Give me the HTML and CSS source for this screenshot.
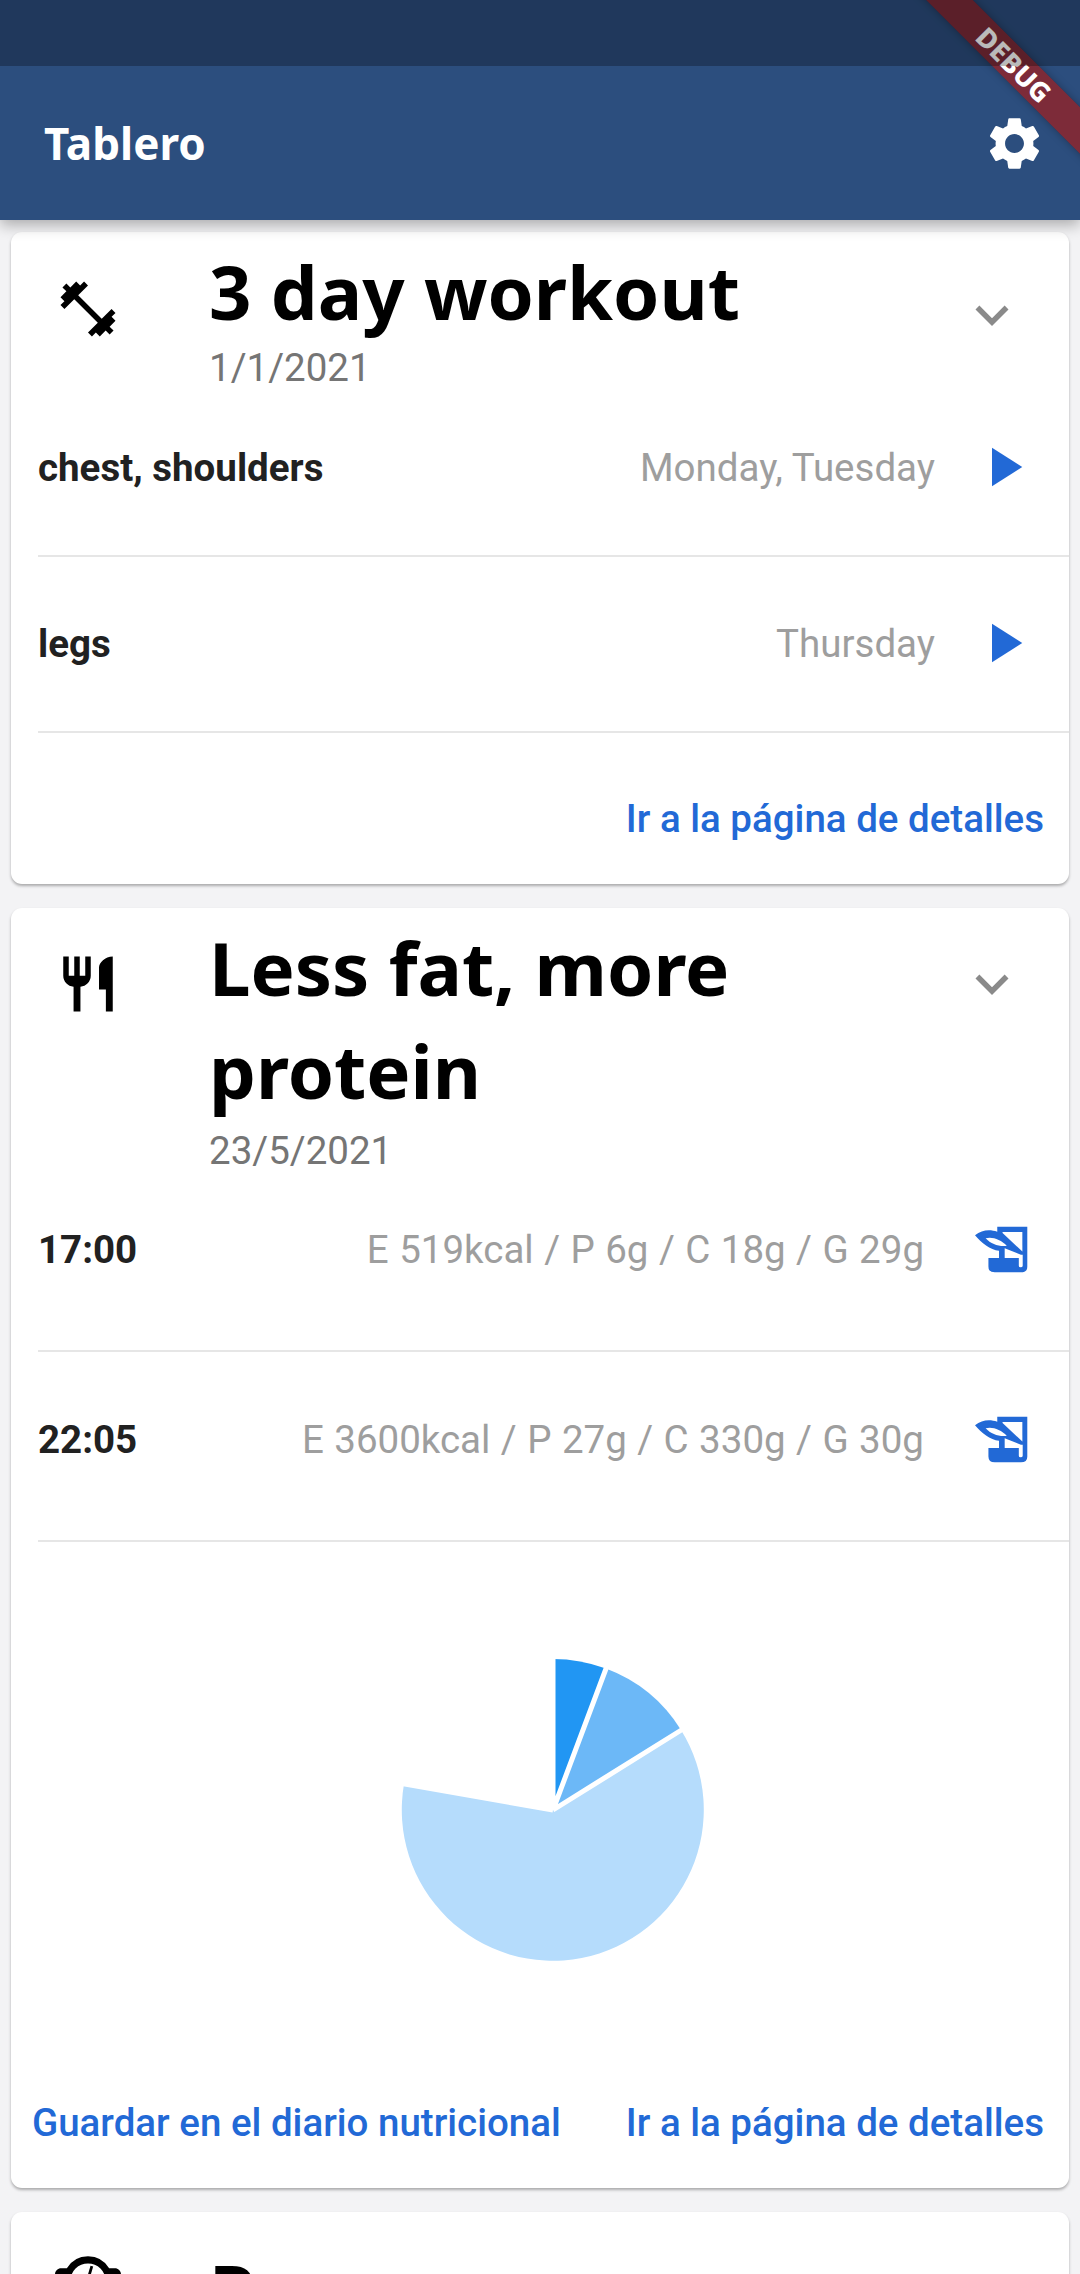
FILE: index.html
```html
<!DOCTYPE html>
<html lang="en">
<head>
  <meta charset="UTF-8">
  <meta name="viewport" content="width=device-width, initial-scale=1.0">
  <title>Tablero</title>
  <link rel="stylesheet" href="styles.css">
</head>
<body>
  <div class="screen">
    <header class="appbar">
      <h1 class="appbar-title">Tablero</h1>
      <svg class="gear" viewBox="0 0 24 24"><path d="M19.14 12.94c.04-.3.06-.61.06-.94 0-.32-.02-.64-.07-.94l2.03-1.58a.49.49 0 0 0 .12-.61l-1.92-3.32a.488.488 0 0 0-.59-.22l-2.39.96c-.5-.38-1.03-.7-1.62-.94l-.36-2.54a.484.484 0 0 0-.48-.41h-3.84c-.24 0-.43.17-.47.41l-.36 2.54c-.59.24-1.13.57-1.62.94l-2.39-.96c-.22-.08-.47 0-.59.22L2.74 8.87c-.12.21-.08.47.12.61l2.03 1.58c-.05.3-.09.63-.09.94s.02.64.07.94l-2.03 1.58a.49.49 0 0 0-.12.61l1.92 3.32c.12.22.37.29.59.22l2.39-.96c.5.38 1.03.7 1.62.94l.36 2.54c.05.24.24.41.48.41h3.84c.24 0 .44-.17.47-.41l.36-2.54c.59-.24 1.13-.56 1.62-.94l2.39.96c.22.08.47 0 .59-.22l1.92-3.32c.12-.22.07-.47-.12-.61l-2.01-1.58zM12 15.6c-1.98 0-3.6-1.62-3.6-3.6s1.62-3.6 3.6-3.6 3.6 1.62 3.6 3.6-1.62 3.6-3.6 3.6z"/></svg>
    </header>

    <main class="list">
      <section class="card card-workout">
        <div class="card-head">
          <div class="head-icon">
            <svg class="icon-big" viewBox="0 0 24 24"><path d="M20.57 14.86 22 13.43 20.57 12 17 15.57 8.43 7 12 3.43 10.57 2 9.14 3.43 7.71 2 5.57 4.14 4.14 2.71 2.71 4.14l1.43 1.43L2 7.71l1.43 1.43L2 10.57 3.43 12 7 8.43 15.57 17 12 20.57 13.43 22l1.43-1.43L16.29 22l2.14-2.14 1.43 1.43 1.43-1.43-1.43-1.43L22 16.29z"/></svg>
          </div>
          <div class="head-text">
            <h2 class="card-title">3 day workout</h2>
            <div class="card-date">1/1/2021</div>
          </div>
          <svg class="chevron" viewBox="0 0 24 24"><path d="M7.41 8.59 12 13.17l4.59-4.58L18 10l-6 6-6-6z"/></svg>
        </div>
        <div class="row">
          <span class="row-name">chest, shoulders</span>
          <span class="row-info">Monday, Tuesday</span>
          <svg class="row-play" viewBox="0 0 24 24"><path d="M8 5v14l11-7z"/></svg>
        </div>
        <div class="row">
          <span class="row-name">legs</span>
          <span class="row-info">Thursday</span>
          <svg class="row-play" viewBox="0 0 24 24"><path d="M8 5v14l11-7z"/></svg>
        </div>
        <div class="card-links">
          <a class="link">Ir a la página de detalles</a>
        </div>
      </section>

      <section class="card card-diet">
        <div class="card-head">
          <div class="head-icon">
            <svg class="icon-big" viewBox="0 0 24 24"><path d="M11 9H9V2H7v7H5V2H3v7c0 2.12 1.66 3.84 3.75 3.97V22h2.5v-9.03C11.34 12.84 13 11.12 13 9V2h-2v7zm5-3v8h2.5v8H21V2c-2.76 0-5 2.24-5 4z"/></svg>
          </div>
          <div class="head-text">
            <h2 class="card-title">Less fat, more protein</h2>
            <div class="card-date">23/5/2021</div>
          </div>
          <svg class="chevron" viewBox="0 0 24 24"><path d="M7.41 8.59 12 13.17l4.59-4.58L18 10l-6 6-6-6z"/></svg>
        </div>
        <div class="row row-meal">
          <span class="row-name">17:00</span>
          <span class="row-info">E 519kcal / P 6g / C 18g / G 29g</span>
          <svg class="row-log" viewBox="42 45 150 142" preserveAspectRatio="none">
            <path d="M105 47H190V168Q190 185 172 185H98Q80 185 80 167V142H110V120C85 118 60 95 42 73C62 55 85 55 105 62Z"/>
            <path class="log-cut" d="M120 63H176V122L120 66Z"/>
            <path class="log-cut" d="M126 112L172 132H177V165Q177 170 171 170Q166 170 166 165V142H126Z"/>
            <path class="log-cut" d="M72 82C90 76 115 85 132 105C110 108 88 100 72 82Z"/>
          </svg>
        </div>
        <div class="row row-meal">
          <span class="row-name">22:05</span>
          <span class="row-info">E 3600kcal / P 27g / C 330g / G 30g</span>
          <svg class="row-log" viewBox="42 45 150 142" preserveAspectRatio="none">
            <path d="M105 47H190V168Q190 185 172 185H98Q80 185 80 167V142H110V120C85 118 60 95 42 73C62 55 85 55 105 62Z"/>
            <path class="log-cut" d="M120 63H176V122L120 66Z"/>
            <path class="log-cut" d="M126 112L172 132H177V165Q177 170 171 170Q166 170 166 165V142H126Z"/>
            <path class="log-cut" d="M72 82C90 76 115 85 132 105C110 108 88 100 72 82Z"/>
          </svg>
        </div>
        <div class="pie-wrap">
          <svg class="pie" viewBox="-160 -160 320 320">
            <path d="M0 0V-151A151 151 0 0 1 53 -141.4Z" fill="#2196f3"/>
            <path d="M0 0L53 -141.4A151 151 0 0 1 128 -80Z" fill="#6cb8f7"/>
            <path d="M0 0L128 -80A151 151 0 1 1 -149 -26Z" fill="#b5dcfc"/>
            <path d="M0 0V-153M0 0L54 -144M0 0L130 -81M0 0L-151 -26.4" stroke="#fff" stroke-width="5" fill="none"/>
          </svg>
        </div>
        <div class="card-links">
          <a class="link">Guardar en el diario nutricional</a>
          <a class="link">Ir a la página de detalles</a>
        </div>
      </section>

      <section class="card card-weight">
        <div class="card-head">
          <div class="head-icon">
            <svg class="icon-big" viewBox="0 0 24 24">
              <path d="M12 3a9 9 0 0 0-7.7 4.4H2.2C1 7.4 0 8.4 0 9.6V20h24V9.6c0-1.2-1-2.2-2.2-2.2h-2.1A9 9 0 0 0 12 3zm0 2.6a6.4 6.4 0 1 1 0 12.8 6.4 6.4 0 0 1 0-12.8z"/>
              <path d="M13.4 6.6l-1 3.4" stroke="#000" stroke-width="1" fill="none"/>
            </svg>
          </div>
          <div class="head-text">
            <h2 class="card-title">Peso</h2>
          </div>
        </div>
      </section>
    </main>

    <div class="banner"><span class="banner-text">DEBUG</span></div>
    <div class="statusbar"></div>
  </div>
</body>
</html>
```

FILE: styles.css
```css
/* general styling */
* {
  box-sizing: border-box;
  margin: 0;
  padding: 0;
}

html, body {
  height: 100%;
  overflow: hidden;
}

body {
  background-color: #f3f3f5;
  font-family: Roboto, sans-serif;
}

.screen {
  height: 2274px;
  overflow: hidden;
  position: relative;
  width: 1080px;
}

/* app bar */
.appbar {
  align-items: center;
  background-color: #2c4e7e;
  box-shadow: 0 5px 14px rgba(0, 0, 0, .3);
  display: flex;
  height: 220px;
  justify-content: space-between;
  padding: 66px 34px 0 44px;
  position: relative;
  z-index: 1;
}

.appbar-title {
  color: #fff;
  font-family: "Noto Sans", sans-serif;
  font-size: 44px;
  font-weight: 700;
}

.gear {
  fill: #fff;
  height: 63px;
  width: 63px;
}

.statusbar {
  background-color: rgba(0, 0, 0, .27);
  height: 66px;
  left: 0;
  position: absolute;
  top: 0;
  width: 100%;
  z-index: 3;
}

/* debug ribbon, same geometry as the flutter one */
.banner {
  align-items: center;
  background-color: rgba(160, 28, 28, .7);
  box-shadow: 0 0 8px rgba(0, 0, 0, .3);
  display: flex;
  height: 33px;
  justify-content: center;
  position: absolute;
  right: -84px;
  top: 48px;
  transform: rotate(45deg);
  width: 300px;
  z-index: 2;
}

.banner-text {
  color: #fff;
  font-family: "Noto Sans", sans-serif;
  font-size: 27px;
  font-weight: 800;
  line-height: 33px;
}

/* cards */
.list {
  display: flex;
  flex-direction: column;
  gap: 24px;
  padding: 12px 11px 0;
}

.card {
  background-color: #fff;
  border-radius: 11px;
  box-shadow: 0 2px 3px rgba(0, 0, 0, .3);
  flex-shrink: 0;
  overflow: hidden;
}

.card-workout {
  height: 652px;
}

.card-diet {
  height: 1280px;
}

.card-weight {
  height: 200px;
}

.card-head {
  display: flex;
}

.head-icon {
  flex-shrink: 0;
  padding: 44px 0 0 44px;
  width: 198px;
}

.card-diet .head-icon {
  padding-top: 43px;
}

.card-weight .head-icon {
  padding-top: 36px;
}

.icon-big {
  display: block;
  height: 66px;
  width: 66px;
}

.head-text {
  flex: 1;
  min-width: 0;
}

.card-title {
  color: #000;
  font-family: "Noto Sans", sans-serif;
  font-size: 74.25px;
  font-weight: 700;
  line-height: 103px;
  max-width: 560px;
  padding-top: 8px;
}

.card-weight .card-title {
  padding-top: 27px;
}

.card-date {
  color: #757575;
  font-size: 38.5px;
  line-height: 23px;
  padding: 13px 0 2px;
}

.card-diet .card-date {
  padding: 17px 0 0;
}

.chevron {
  fill: #8a8a8a;
  flex-shrink: 0;
  height: 66px;
  margin: 50px 44px 0 0;
  width: 66px;
}

.card-diet .chevron {
  margin-top: 43px;
}

/* rows */
.row {
  align-items: center;
  border-bottom: 2px solid #e6e6e6;
  display: flex;
  height: 176px;
  justify-content: space-between;
  margin-left: 27px;
  padding-bottom: 2px;
}

.row-meal {
  height: 190px;
  padding-bottom: 14px;
}

.row-name {
  color: #212121;
  font-size: 38.5px;
  font-weight: 700;
}

.row-info {
  color: #9e9e9e;
  flex: 1;
  font-size: 38.5px;
  margin-right: 35px;
  text-align: right;
}

.row-meal .row-info {
  margin-right: 51px;
  word-spacing: .9px;
}

.row-play {
  fill: #2269d6;
  height: 66px;
  margin-right: 33px;
  width: 66px;
}

.row-log {
  fill: #2269d6;
  height: 47px;
  margin-right: 41px;
  width: 53px;
}

.log-cut {
  fill: #fff;
}

/* pie chart */
.pie-wrap {
  display: flex;
  height: 493px;
  justify-content: center;
  padding-top: 108px;
}

.pie {
  height: 320px;
  margin-left: 26px;
  width: 320px;
}

/* footer links */
.card-links {
  display: flex;
  gap: 65px;
  justify-content: flex-end;
  padding: 65px 25px 0 0;
}

.card-workout .card-links {
  padding-top: 63px;
}

.link {
  color: #2269d6;
  font-size: 38.5px;
  font-weight: 500;
  white-space: nowrap;
}
```
